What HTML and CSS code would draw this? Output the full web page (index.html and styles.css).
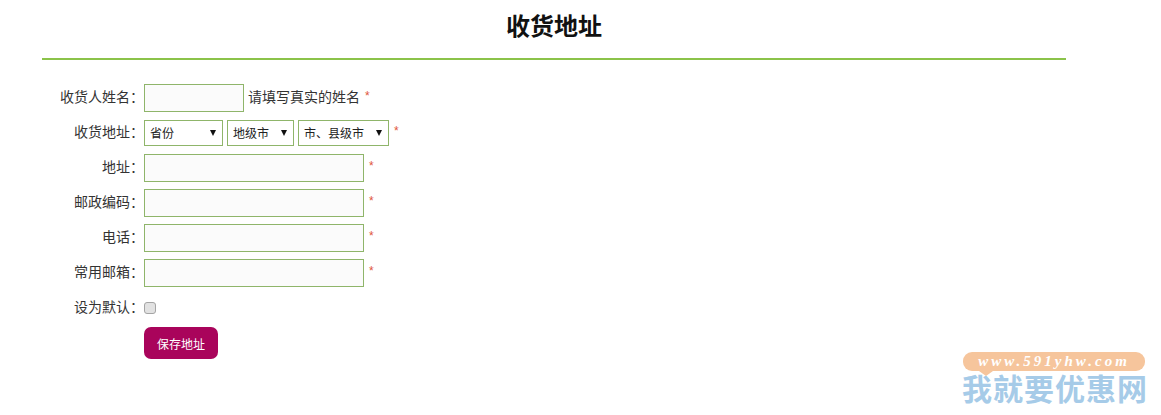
FILE: index.html
```html
<!DOCTYPE html>
<html lang="zh-CN">
<head>
  <meta charset="UTF-8">
  <title>收货地址</title>
  <link rel="stylesheet" href="styles.css">
</head>
<body>
<div class="address">
  <h2>收货地址</h2>

  <form class="address-form">
    <div class="row">
      <label>收货人姓名：</label>
      <input class="text short" type="text">
      <span class="hint">请填写真实的姓名</span>
      <span class="req">*</span>
    </div>
    <div class="row">
      <label>收货地址：</label>
      <select class="province"><option>省份</option></select>
      <select class="city"><option>地级市</option></select>
      <select class="county"><option>市、县级市</option></select>
      <span class="req">*</span>
    </div>
    <div class="row">
      <label>地址：</label>
      <input class="text" type="text">
      <span class="req">*</span>
    </div>
    <div class="row">
      <label>邮政编码：</label>
      <input class="text" type="text">
      <span class="req">*</span>
    </div>
    <div class="row">
      <label>电话：</label>
      <input class="text" type="text">
      <span class="req">*</span>
    </div>
    <div class="row">
      <label>常用邮箱：</label>
      <input class="text" type="text">
      <span class="req">*</span>
    </div>
    <div class="row">
      <label>设为默认：</label>
      <input class="check" type="checkbox">
    </div>
    <div class="row row-btn">
      <label></label>
      <button type="button" class="save-btn">保存地址</button>
    </div>
  </form>
</div>

<div class="watermark">
  <div class="watermark-url">www.591yhw.com</div>
  <div class="watermark-name">我就要优惠网</div>
</div>
</body>
</html>
```

FILE: styles.css
```css
html, body {
  margin: 0;
  padding: 0;
}
body {
  height: 415px;
  overflow: hidden;
  background: #fff;
  font-family: "Liberation Sans", "Noto Sans CJK SC", sans-serif;
  font-size: 14px;
  color: #333;
}
.address {
  width: 1024px;
  margin-left: 42px;
}
h2 {
  margin: 0;
  height: 58px;
  line-height: 55px;
  border-bottom: 2px solid #8bc34a;
  text-align: center;
  font-family: "Liberation Serif", "Noto Sans CJK SC", serif;
  font-size: 24px;
  font-weight: bold;
  color: #111;
}
.address-form {
  padding-top: 24px;
  display: flex;
  flex-direction: column;
  gap: 7px;
}
.row {
  display: flex;
  align-items: center;
  height: 28px;
}
.row-btn {
  height: 32px;
  margin-top: -2px;
}
label {
  width: 102px;
  padding-bottom: 5px;
  text-align: right;
  flex: none;
  font-family: "Noto Sans CJK TC", sans-serif;
}
.text {
  width: 220px;
  height: 28px;
  box-sizing: border-box;
  border: 1px solid #8fb56a;
  background: #fbfbfb;
  padding: 0 6px;
  margin: 0;
}
.text.short {
  width: 100px;
}
.hint {
  margin-left: 4px;
  padding-bottom: 5px;
}
.req {
  margin-left: 5px;
  margin-top: -4px;
  color: #e0553a;
  font-size: 12px;
}
select {
  appearance: none;
  height: 26px;
  box-sizing: border-box;
  border: 1px solid #8fb56a;
  border-radius: 0;
  background: #fff url("data:image/svg+xml,%3Csvg xmlns='http://www.w3.org/2000/svg' width='6' height='6'%3E%3Cpath d='M0 0h6L3 6z' fill='%23111'/%3E%3C/svg%3E") no-repeat right 6px center;
  font-family: inherit;
  font-size: 12px;
  color: #222;
  margin: 0 4px 0 0;
  padding: 2px 5px 0;
}
.province { width: 79px; }
.city { width: 67px; }
.county { width: 91px; margin-right: 0; }
.check {
  appearance: none;
  width: 12px;
  height: 12px;
  margin: 0;
  box-sizing: border-box;
  border: 1px solid #a5a5a5;
  border-radius: 3px;
  background: #e2e2e2;
}
.save-btn {
  width: 74px;
  height: 32px;
  border: none;
  border-radius: 7px;
  background: #a9045b;
  color: #fff;
  font-family: inherit;
  font-size: 12px;
  padding: 0;
}
/* site watermark stamped over the corner */
.watermark {
  position: absolute;
  left: 962px;
  top: 352px;
  width: 184px;
}
.watermark-url {
  position: relative;
  margin: 0 1px;
  height: 19px;
  line-height: 19px;
  border-radius: 9px;
  background: #f6c59c;
  text-align: center;
  font-family: "Liberation Serif", serif;
  font-style: italic;
  font-weight: bold;
  font-size: 15px;
  letter-spacing: 3px;
  color: #fff;
}
.watermark-url::after {
  content: "";
  position: absolute;
  left: 16px;
  top: 19px;
  border-top: 5px solid #f6c59c;
  border-left: 7px solid transparent;
  border-right: 7px solid transparent;
}
.watermark-name {
  margin-top: 2px;
  line-height: 34px;
  white-space: nowrap;
  font-size: 30px;
  font-weight: bold;
  letter-spacing: 1px;
  color: #a6cbe8;
}
```
